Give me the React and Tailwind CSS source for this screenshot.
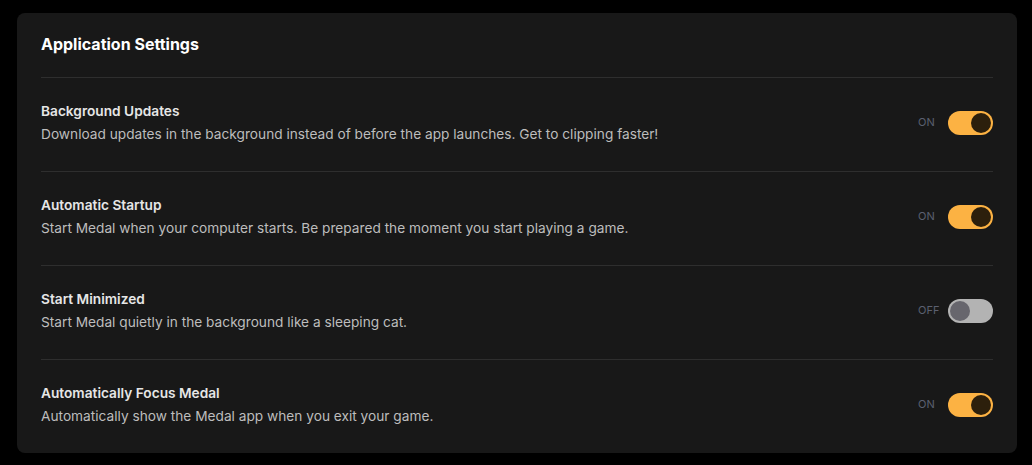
const settings = [
  {
    title: "Background Updates",
    description:
      "Download updates in the background instead of before the app launches. Get to clipping faster!",
    on: true,
  },
  {
    title: "Automatic Startup",
    description:
      "Start Medal when your computer starts. Be prepared the moment you start playing a game.",
    on: true,
  },
  {
    title: "Start Minimized",
    description: "Start Medal quietly in the background like a sleeping cat.",
    on: false,
  },
  {
    title: "Automatically Focus Medal",
    description: "Automatically show the Medal app when you exit your game.",
    on: true,
  },
];

const Toggle = ({ on }) => (
  <div className="flex items-center">
    <span className="w-[30px] text-[11px] leading-none text-[#5b6070]">{on ? "ON" : "OFF"}</span>
    <div
      className={`flex h-6 w-[45px] items-center rounded-full px-[2px] ${
        on ? "justify-end bg-[#fcb243]" : "justify-start bg-[#b3b3b3]"
      }`}
    >
      <div className={`h-5 w-5 rounded-full ${on ? "bg-[#2c1f0c]" : "bg-[#67666d]"}`} />
    </div>
  </div>
);

export default function App() {
  return (
    <div className="min-h-[465px] bg-black pt-[13px] pl-[17px] pr-[15px] font-['Inter','Noto_Sans',sans-serif]">
      <div className="rounded-lg bg-[#181818] px-6">
        <div className="border-b border-[#2e2e2e] pt-5 pb-[22px]">
          <h1 className="text-[16px] font-bold leading-[22px] text-white">Application Settings</h1>
        </div>
        {settings.map((s, i) => (
          <div
            key={i}
            className={`flex items-center justify-between pt-[23px] pb-[27px] ${
              i < settings.length - 1 ? "border-b border-[#2e2e2e]" : ""
            }`}
          >
            <div>
              <h3 className="text-[13.7px] font-semibold leading-5 text-[#e6e6e6]">{s.title}</h3>
              <p className="mt-[3px] text-[13.7px] leading-5 text-[#bdbdbd]">{s.description}</p>
            </div>
            <Toggle on={s.on} />
          </div>
        ))}
      </div>
    </div>
  );
}
